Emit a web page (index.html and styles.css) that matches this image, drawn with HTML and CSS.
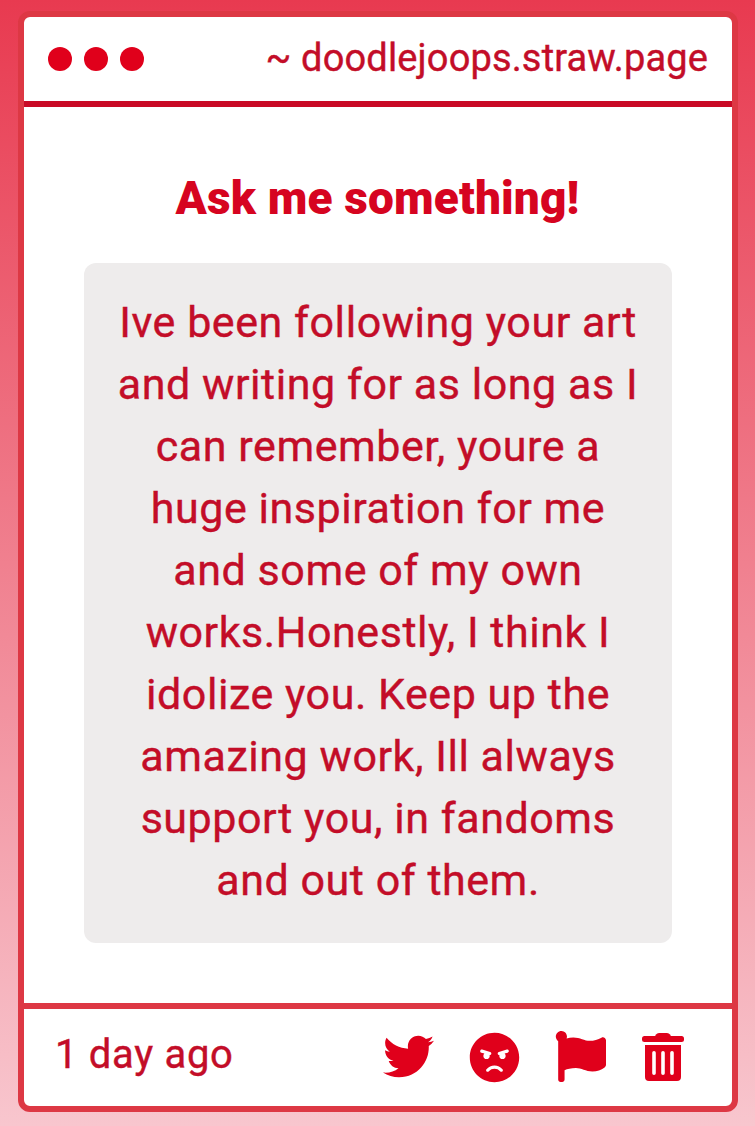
FILE: index.html
```
<!DOCTYPE html>
<html lang="en">
<head>
<meta charset="utf-8">
<title>Ask me something!</title>
<link rel="stylesheet" href="styles.css">
</head>
<body>
<main class="card">
  <header class="bar">
    <div class="dots"><span class="dot"></span><span class="dot"></span><span class="dot"></span></div>
    <span class="site">~ doodlejoops.straw.page</span>
  </header>
  <section class="content">
    <h1 class="title">Ask me something!</h1>
    <p class="message">Ive been following your art<br>and writing for as long as I<br>can remember, youre a<br>huge inspiration for me<br>and some of my own<br>works.Honestly, I think I<br>idolize you. Keep up the<br>amazing work, Ill always<br>support you, in fandoms<br>and out of them.</p>
  </section>
  <footer class="foot">
    <span class="time">1 day ago</span>
    <div class="actions">
      <svg class="icon" viewBox="0 0 512 512"><path d="M459.37 151.716c.325 4.548.325 9.097.325 13.645 0 138.72-105.583 298.558-298.558 298.558-59.452 0-114.68-17.219-161.137-47.106 8.447.974 16.568 1.299 25.34 1.299 49.055 0 94.213-16.568 130.274-44.832-46.132-.975-84.792-31.188-98.112-72.772 6.498.974 12.995 1.624 19.818 1.624 9.421 0 18.843-1.3 27.614-3.573-48.081-9.747-84.143-51.98-84.143-102.985v-1.299c13.969 7.797 30.214 12.67 47.431 13.319-28.264-18.843-46.781-51.005-46.781-87.391 0-19.492 5.197-37.36 14.294-52.954 51.655 63.675 129.3 105.258 216.365 109.807-1.624-7.797-2.599-15.918-2.599-24.04 0-57.828 46.782-104.934 104.934-104.934 30.213 0 57.502 12.67 76.67 33.137 23.715-4.548 46.456-13.32 66.599-25.34-7.798 24.366-24.366 44.833-46.132 57.827 21.117-2.273 41.584-8.122 60.426-16.243-14.292 20.791-32.161 39.308-52.628 54.253z"/></svg>
      <svg class="icon face" viewBox="0 0 496 512"><path fill-rule="evenodd" d="M248 8C111 8 0 119 0 256s111 248 248 248 248-111 248-248S385 8 248 8zM136 240c0-9.300 4.100-17.500 10.500-23.400l-31-9.300c-8.500-2.500-13.300-11.500-10.700-19.900 2.500-8.500 11.400-13.200 19.900-10.700l80 24c8.500 2.500 13.300 11.500 10.700 19.900-2.100 6.900-8.400 11.400-15.300 11.400-.5 0-1.100-.2-1.700-.2.700 2.700 1.700 5.300 1.700 8.200 0 17.700-14.300 32-32 32s-32.100-14.300-32.100-32zm168 154.200c-27.800-33.400-84.200-33.400-112.100 0-13.500 16.300-38.200-4.200-24.600-20.500 20-24 49.400-37.800 80.600-37.800s60.600 13.800 80.600 37.800c13.900 16.600-11.400 36.400-24.500 20.500zm76.600-186.900l-31 9.300c6.300 5.800 10.500 14.100 10.500 23.400 0 17.700-14.300 32-32 32s-32-14.300-32-32c0-2.900.9-5.600 1.700-8.200-.6.100-1.100.2-1.700.2-6.900 0-13.200-4.500-15.300-11.400-2.500-8.500 2.300-17.400 10.700-19.900l80-24c8.400-2.500 17.400 2.300 19.900 10.700 2.500 8.500-2.300 17.400-10.800 19.900z"/></svg>
      <svg class="icon" viewBox="0 0 512 512"><path d="M349.565 98.783C295.978 98.783 251.721 64 184.348 64c-24.955 0-47.309 4.384-68.045 12.013a55.947 55.947 0 0 0 3.586-23.562C118.117 24.015 94.806 1.206 66.338.048 34.345-1.254 8 24.296 8 56c0 19.026 9.497 35.825 24 45.945V488c0 13.255 10.745 24 24 24h16c13.255 0 24-10.745 24-24v-94.400c28.311-12.064 63.582-22.122 114.435-22.122 53.588 0 97.844 34.783 165.217 34.783 48.169 0 86.667-16.294 122.505-40.858C506.840 359.452 512 349.571 512 339.045v-243.100c0-23.393-24.269-38.870-45.485-29.016-34.338 15.948-76.454 31.854-116.950 31.854z"/></svg>
      <svg class="icon trash" viewBox="0 0 42 50"><rect x="0" y="4" width="42" height="6" rx="2.500"/><path d="M12 6 14 2.500Q15 1 17 1h8q2 0 3 1.500L30 6z"/><path fill-rule="evenodd" d="M3 13h36v32q0 4-4 4H7q-4 0-4-4zM12 19a1.800 1.800 0 0 0-1.800 1.800v20.400a1.800 1.800 0 0 0 3.600 0V20.800A1.800 1.800 0 0 0 12 19zm9 0a1.800 1.800 0 0 0-1.800 1.800v20.400a1.800 1.800 0 0 0 3.600 0V20.800A1.800 1.800 0 0 0 21 19zm9 0a1.800 1.800 0 0 0-1.800 1.800v20.400a1.800 1.800 0 0 0 3.600 0V20.800A1.800 1.800 0 0 0 30 19z"/></svg>
    </div>
  </footer>
</main>
</body>
</html>
```
FILE: styles.css
```
* { box-sizing: border-box; }
body {
  margin: 0;
  height: 1126px;
  padding: 11px 17px 14px 18px;
  background: linear-gradient(#e83a50, #f8c6ce);
  font-family: Roboto, sans-serif;
  color: #c30d28;
  -webkit-text-stroke: 0.4px;
}
.card {
  height: 1101px;
  display: flex;
  flex-direction: column;
  background: #fff;
  border: 6px solid #dd3844;
  border-radius: 12px;
}
.bar {
  height: 90px;
  display: flex;
  align-items: center;
  justify-content: space-between;
  padding: 0 24px;
  border-bottom: 6px solid #c90a26;
}
.dots { display: flex; gap: 12px; }
.dot { width: 24px; height: 24px; border-radius: 50%; background: #e0001b; }
.site { padding-bottom: 3px; font-size: 38px; letter-spacing: 0.15px; }
.content { flex: 1; padding: 60px; }
.title {
  margin: 0 0 34px;
  padding-right: 1px;
  font-size: 46px;
  line-height: 62px;
  font-weight: 900;
  letter-spacing: 0.15px;
  text-align: center;
  color: #d60420;
  -webkit-text-stroke: 0;
}
.message {
  margin: 0;
  height: 680px;
  padding: 28px 0;
  background: #eeecec;
  border-radius: 12px;
  font-size: 43px;
  line-height: 62px;
  letter-spacing: 0.55px;
  text-align: center;
  white-space: nowrap;
}
.foot {
  height: 103px;
  display: flex;
  align-items: center;
  justify-content: space-between;
  padding: 0 48px 3px 31px;
  border-top: 6px solid #dd3844;
}
.time { padding-bottom: 3px; font-size: 40px; letter-spacing: 0.7px; }
.actions { display: flex; align-items: center; gap: 36px; }
.icon { width: 51px; height: 51px; margin-left: -1px; fill: #e0001b; stroke: none; }
.face { transform: translateY(1px); }
.trash { width: 42px; height: 50px; margin-left: 0; transform: translateY(1px); }
```
